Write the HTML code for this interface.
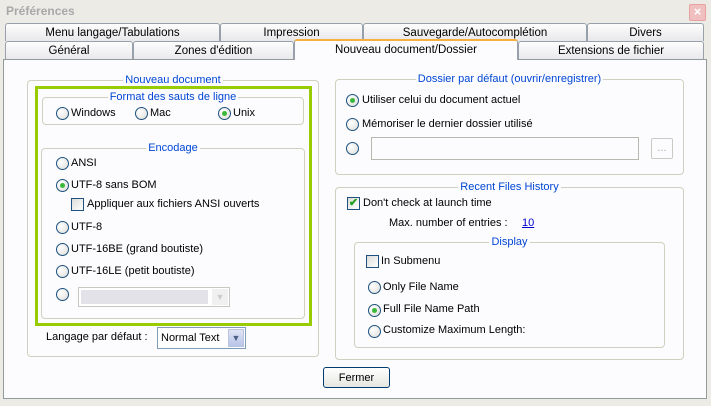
<!DOCTYPE html>
<html><head><meta charset="utf-8"><style>
*{margin:0;padding:0;box-sizing:border-box}
body{width:711px;height:406px;background:#ecebe6;font-family:"Liberation Sans",sans-serif;font-size:11px;color:#000;position:relative;overflow:hidden}
.a{position:absolute;white-space:nowrap}
.title{left:6px;top:4px;font-weight:bold;font-size:12px;color:#a8a8a8}
.close{left:689px;top:4px;width:17px;height:17px;border:1px solid #e8a0a0;background:#f0c0c0;border-radius:2px;color:#fff;font-size:13px;text-align:center;line-height:14px;font-weight:bold}
.tab{position:absolute;height:18px;border:1px solid #98a0ac;border-bottom:none;border-radius:3px 3px 0 0;background:linear-gradient(#fdfdfd,#e8e8ec);text-align:center;line-height:19px;font-size:11.5px}
.tab.act{background:#fcfcfe;border-top:2px solid #f5b040;z-index:2;height:21px;line-height:19px}
.panel{position:absolute;left:3px;top:59px;width:704px;height:340px;border:1px solid #919b9c;background:#fcfcfe}
.grp{position:absolute;border:1px solid #d0d0bf;border-radius:4px}
.lg{position:absolute;top:-7px;left:0;right:0;text-align:center;line-height:13px}
.lg span{background:#fcfcfe;color:#0046d5;padding:0 2px}
.r{position:absolute;width:13px;height:13px;border:1px solid #1c5180;border-radius:50%;background:radial-gradient(circle at 35% 35%,#fff,#dcdcd6)}
.r.on::after{content:"";position:absolute;left:3px;top:3px;width:5px;height:5px;border-radius:50%;background:#3bb83b}
.c{position:absolute;width:13px;height:13px;border:1px solid #1c5180;background:linear-gradient(135deg,#dcdcd7,#fff)}
.t{position:absolute;white-space:nowrap;line-height:15px}
</style></head><body>
<div class="a title">Préférences</div>
<div class="a close">×</div>

<div class="tab" style="left:5px;top:23px;width:215px">Menu langage/Tabulations</div>
<div class="tab" style="left:220px;top:23px;width:143px">Impression</div>
<div class="tab" style="left:363px;top:23px;width:224px">Sauvegarde/Autocomplétion</div>
<div class="tab" style="left:587px;top:23px;width:117px">Divers</div>
<div class="tab" style="left:5px;top:41px;width:128px;height:19px">Général</div>
<div class="tab" style="left:133px;top:41px;width:161px;height:19px">Zones d'édition</div>
<div class="tab act" style="left:294px;top:39px;width:224px">Nouveau document/Dossier</div>
<div class="tab" style="left:518px;top:41px;width:186px;height:19px">Extensions de fichier</div>

<div class="panel"></div>

<div class="grp" style="left:27px;top:80px;width:292px;height:277px"><div class="lg"><span>Nouveau document</span></div></div>
<div class="a" style="left:35px;top:86px;width:277px;height:240px;border:3px solid #99cc00"></div>
<div class="grp" style="left:42px;top:97px;width:262px;height:28px"><div class="lg"><span>Format des sauts de ligne</span></div></div>
<div class="r" style="left:56px;top:107px"></div><div class="t" style="left:71px;top:106px">Windows</div>
<div class="r" style="left:135px;top:107px"></div><div class="t" style="left:150px;top:106px">Mac</div>
<div class="r on" style="left:218px;top:107px"></div><div class="t" style="left:233px;top:106px">Unix</div>

<div class="grp" style="left:41px;top:148px;width:264px;height:171px"><div class="lg"><span>Encodage</span></div></div>
<div class="r" style="left:56px;top:157px"></div><div class="t" style="left:71px;top:156px">ANSI</div>
<div class="r on" style="left:56px;top:179px"></div><div class="t" style="left:71px;top:178px">UTF-8 sans BOM</div>
<div class="c" style="left:71px;top:198px"></div><div class="t" style="left:87px;top:197px">Appliquer aux fichiers ANSI ouverts</div>
<div class="r" style="left:56px;top:221px"></div><div class="t" style="left:71px;top:220px">UTF-8</div>
<div class="r" style="left:56px;top:243px"></div><div class="t" style="left:71px;top:242px">UTF-16BE (grand boutiste)</div>
<div class="r" style="left:56px;top:265px"></div><div class="t" style="left:71px;top:264px">UTF-16LE (petit boutiste)</div>
<div class="r" style="left:56px;top:288px"></div>
<div class="a" style="left:78px;top:287px;width:152px;height:20px;border:1px solid #c8c8c0;background:#fff"><div class="a" style="left:2px;top:2px;width:127px;height:14px;background:#e2e2e8"></div><div class="a" style="right:1px;top:1px;width:16px;height:16px;background:#f0f0f0;color:#ccc;font-size:9px;text-align:center;line-height:16px">▼</div></div>

<div class="t" style="left:46px;top:330px">Langage par défaut :</div>
<div class="a" style="left:157px;top:327px;width:89px;height:22px;border:1px solid #7f9db9;background:#fff"><div class="t" style="left:3px;top:3px">Normal Text</div><div class="a" style="right:1px;top:1px;width:16px;height:18px;background:linear-gradient(#e0e4f4,#b8c4e8);border:1px solid #b8c4e0;text-align:center;line-height:16px;font-size:9px;color:#4d6185">▼</div></div>

<div class="grp" style="left:335px;top:79px;width:349px;height:96px"><div class="lg"><span>Dossier par défaut (ouvrir/enregistrer)</span></div></div>
<div class="r on" style="left:346px;top:94px"></div><div class="t" style="left:362px;top:93px">Utiliser celui du document actuel</div>
<div class="r" style="left:346px;top:118px"></div><div class="t" style="left:362px;top:117px">Mémoriser le dernier dossier utilisé</div>
<div class="r" style="left:346px;top:142px"></div>
<div class="a" style="left:371px;top:137px;width:268px;height:23px;border:1px solid #b8b8b0"></div>
<div class="a" style="left:651px;top:138px;width:22px;height:21px;border:1px solid #cacac4;border-radius:2px;color:#aaa;text-align:center;line-height:18px">...</div>

<div class="grp" style="left:335px;top:187px;width:349px;height:173px"><div class="lg"><span>Recent Files History</span></div></div>
<div class="c" style="left:347px;top:197px;color:#21a121;font-size:11px;line-height:11px;text-align:center;font-weight:bold">✔</div><div class="t" style="left:363px;top:196px">Don't check at launch time</div>
<div class="t" style="left:389px;top:216px">Max. number of entries :</div>
<div class="t" style="left:522px;top:216px;color:#0000cc;text-decoration:underline">10</div>
<div class="grp" style="left:354px;top:242px;width:311px;height:106px"><div class="lg"><span>Display</span></div></div>
<div class="c" style="left:366px;top:255px"></div><div class="t" style="left:381px;top:254px">In Submenu</div>
<div class="r" style="left:368px;top:281px"></div><div class="t" style="left:383px;top:280px">Only File Name</div>
<div class="r on" style="left:368px;top:304px"></div><div class="t" style="left:383px;top:302px">Full File Name Path</div>
<div class="r" style="left:368px;top:325px"></div><div class="t" style="left:383px;top:323px">Customize Maximum Length:</div>

<div class="a" style="left:323px;top:367px;width:67px;height:21px;border:1px solid #003c74;border-radius:3px;background:linear-gradient(#fff,#e6e6e0);text-align:center;line-height:20px">Fermer</div>
</body></html>
